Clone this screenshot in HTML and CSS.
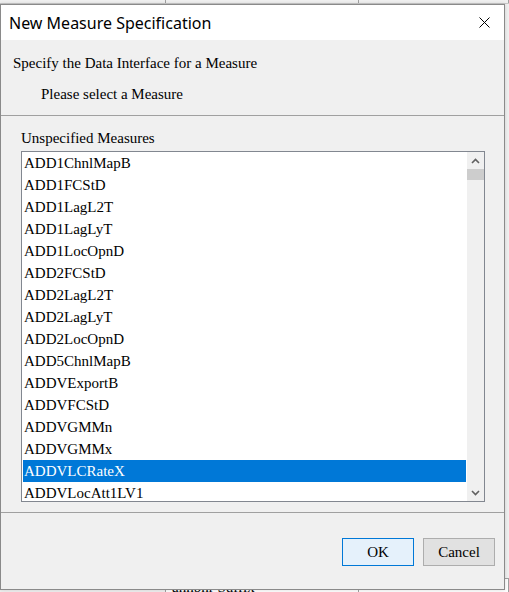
FILE: index.html
```
<!doctype html>
<html>
	<head>
		<meta charset="UTF-8">
		<title>New Measure Specification</title>
		<link rel="stylesheet" href="styles.css">
	</head>

	<body>
		<!--背景里的表格-->
		<div class="sheet">
			<div class="sheet-row top">
				<span class="cell c1"></span>
				<span class="cell c2"></span>
				<span class="cell c3"></span>
			</div>
			<div class="sheet-row bottom">
				<span class="cell c1"></span>
				<span class="cell c2">annbnr Suffix</span>
				<span class="cell c3"></span>
			</div>
		</div>

		<!--对话框-->
		<div class="dialog">
			<div class="title-bar">
				<span class="title">New Measure Specification</span>
				<span class="close">
					<svg width="11" height="11" viewBox="0 0 11 11">
						<path d="M0.5 0.5 L10.5 10.5 M10.5 0.5 L0.5 10.5" stroke="#000" stroke-width="1" fill="none" />
					</svg>
				</span>
			</div>
			<div class="body">
				<p class="intro">Specify the Data Interface for a Measure</p>
				<p class="hint">Please select a Measure</p>
				<div class="sep"></div>
				<p class="label">Unspecified Measures</p>
				<div class="list">
					<ul class="items">
						<li>ADD1ChnlMapB</li>
						<li>ADD1FCStD</li>
						<li>ADD1LagL2T</li>
						<li>ADD1LagLyT</li>
						<li>ADD1LocOpnD</li>
						<li>ADD2FCStD</li>
						<li>ADD2LagL2T</li>
						<li>ADD2LagLyT</li>
						<li>ADD2LocOpnD</li>
						<li>ADD5ChnlMapB</li>
						<li>ADDVExportB</li>
						<li>ADDVFCStD</li>
						<li>ADDVGMMn</li>
						<li>ADDVGMMx</li>
						<li class="on">ADDVLCRateX</li>
						<li>ADDVLocAtt1LV1</li>
					</ul>
					<div class="scroll">
						<span class="arrow">
							<svg width="9" height="6" viewBox="0 0 9 6">
								<path d="M1 5 L4.5 1.5 L8 5" stroke="#606060" stroke-width="1.6" fill="none" />
							</svg>
						</span>
						<span class="thumb"></span>
						<span class="track"></span>
						<span class="arrow">
							<svg width="9" height="6" viewBox="0 0 9 6">
								<path d="M1 1 L4.5 4.5 L8 1" stroke="#606060" stroke-width="1.6" fill="none" />
							</svg>
						</span>
					</div>
				</div>
				<div class="sep bottom-sep"></div>
				<div class="buttons">
					<button class="btn ok">OK</button>
					<button class="btn">Cancel</button>
				</div>
			</div>
		</div>
	</body>

</html>
```

FILE: styles.css
```
* {
	margin: 0;
	padding: 0;
	box-sizing: border-box;
}

li {
	list-style: none;
}

body {
	position: relative;
	width: 509px;
	height: 592px;
	overflow: hidden;
	background-color: #f0f0f0;
	font-family: "Liberation Serif", "Times New Roman", serif;
	font-size: 15px;
	color: #000;
}

/* 背景表格 */
.sheet {
	height: 100%;
	display: flex;
	flex-direction: column;
	justify-content: space-between;
}

.sheet-row {
	display: flex;
	height: 4px;
	border-bottom: 1px solid #c8c8c8;
}

.sheet-row.bottom {
	height: 14px;
	border-bottom: none;
	border-top: 1px solid #a0a0a0;
	background-color: #fff;
}

.cell {
	height: 100%;
	border-right: 1px solid #a0a0a0;
	overflow: hidden;
	font-size: 15px;
	line-height: 16px;
	padding-left: 6px;
}

.c1 {
	width: 166px;
	background-color: #f0f0f0;
}

.c2 {
	width: 193px;
}

.c3 {
	flex: 1;
}

/* 对话框 */
.dialog {
	position: absolute;
	left: 0;
	top: 4px;
	width: 505px;
	height: 586px;
	border: 1px solid #8a8a8a;
	background-color: #f0f0f0;
	display: flex;
	flex-direction: column;
	box-shadow: 0 0 4px rgba(0, 0, 0, .15);
}

.title-bar {
	height: 35px;
	background-color: #fff;
	display: flex;
	align-items: center;
	justify-content: space-between;
	padding: 0 14px 0 8px;
}

.title {
	font-family: "Noto Sans", "Segoe UI", sans-serif;
	font-size: 16px;
	color: #000;
}

.close {
	display: flex;
	margin-top: -1px;
}

.body {
	flex: 1;
	display: flex;
	flex-direction: column;
}

.intro {
	line-height: 20px;
	margin-top: 13px;
	padding-left: 12px;
}

.hint {
	line-height: 20px;
	margin-top: 11px;
	padding-left: 40px;
}

.sep {
	height: 1px;
	margin-top: 11px;
	background-color: #a0a0a0;
}

.label {
	line-height: 20px;
	margin-top: 12px;
	padding-left: 20px;
}

.list {
	display: flex;
	width: 464px;
	height: 351px;
	margin: 3px 0 0 20px;
	border: 1px solid #828790;
	background-color: #fff;
	overflow: hidden;
}

.items {
	flex: 1;
	padding: 0 1px 0 1px;
	overflow: hidden;
}

.items li {
	height: 22px;
	line-height: 22px;
	padding-left: 1px;
	white-space: nowrap;
}

.items li.on {
	background-color: #0078d7;
	color: #fff;
}

.scroll {
	width: 17px;
	display: flex;
	flex-direction: column;
	background-color: #f0f0f0;
}

.arrow {
	height: 17px;
	display: flex;
	align-items: center;
	justify-content: center;
}

.thumb {
	height: 11px;
	background-color: #cdcdcd;
}

.track {
	flex: 1;
}

.bottom-sep {
	margin-top: 10px;
}

.buttons {
	display: flex;
	justify-content: flex-end;
	gap: 9px;
	padding: 25px 9px 0 0;
}

.btn {
	width: 72px;
	height: 28px;
	border: 1px solid #adadad;
	background-color: #e1e1e1;
	font-family: "Liberation Serif", "Times New Roman", serif;
	font-size: 15px;
	color: #000;
}

.btn.ok {
	border-color: #0078d7;
	background-color: #e5f1fb;
}
```
